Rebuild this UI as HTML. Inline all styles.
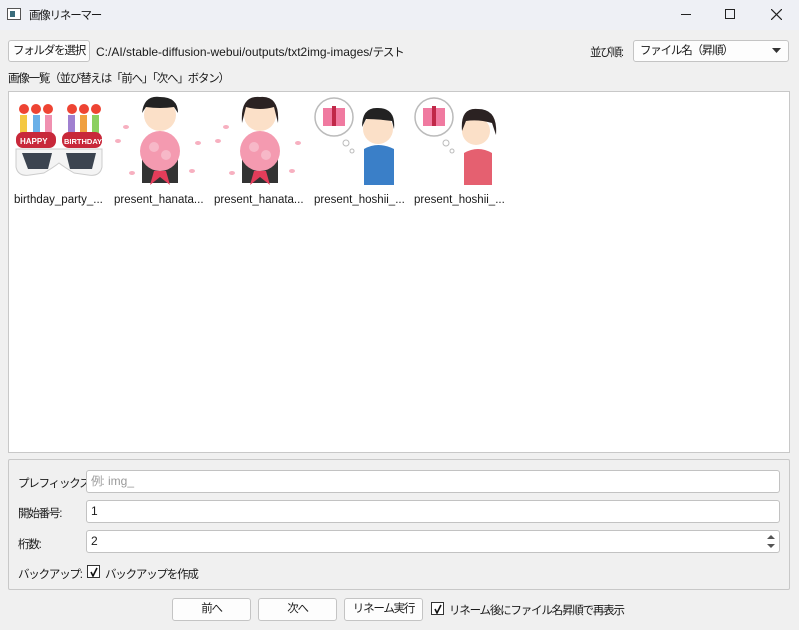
<!DOCTYPE html>
<html><head><meta charset="utf-8"><style>
*{box-sizing:border-box;margin:0;padding:0}
body{width:799px;height:630px;background:#f0f0f0;font-family:"Liberation Sans","Noto Sans CJK JP",sans-serif;font-size:12px;color:#1a1a1a;position:relative;overflow:hidden}
.a{position:absolute}
.j{letter-spacing:-1.2px;font-size:11.5px}
.btn{position:absolute;background:#fdfdfd;border:1px solid #c4c4c4;border-radius:3px;text-align:center;line-height:20px;font-size:11.5px;letter-spacing:-1.2px;white-space:nowrap}
.inp{position:absolute;background:#fff;border:1px solid #c2c2c2;border-radius:3px;height:23px;line-height:21px;padding-left:4px;font-size:12px}
.cb{position:absolute;width:13px;height:13px;border:1px solid #333;background:#fff}
.lbl{position:absolute;font-size:11.5px;white-space:nowrap}
</style></head><body>
<div class="a" style="left:0;top:0;width:799px;height:30px;background:#eef0f5"></div>
<div class="a" style="left:7px;top:8px;width:14px;height:12px;border:1px solid #555;background:#fff"><div style="margin:2px;width:5px;height:6px;background:#3b6d7c"></div></div>
<div class="lbl j" style="left:29px;top:7px">画像リネーマー</div>
<div class="a" style="left:681px;top:14px;width:10px;height:1px;background:#222"></div>
<div class="a" style="left:725px;top:9px;width:10px;height:10px;border:1px solid #222"></div>
<svg class="a" style="left:771px;top:9px" width="11" height="11"><path d="M0 0L11 11M11 0L0 11" stroke="#222" stroke-width="1.2"/></svg>

<div class="btn" style="left:8px;top:40px;width:82px;height:22px">フォルダを選択</div>
<div class="lbl" style="left:96px;top:44px;font-size:12px">C:/AI/stable-diffusion-webui/outputs/txt2img-images/<span class="j">テスト</span></div>
<div class="lbl j" style="left:590px;top:44px">並び順:</div>
<div class="btn" style="left:633px;top:40px;width:156px;height:22px;text-align:left;padding-left:6px">ファイル名（昇順）</div>
<svg class="a" style="left:772px;top:48px" width="9" height="6"><path d="M0 0H9L4.5 5Z" fill="#333"/></svg>
<div class="lbl j" style="left:8px;top:70px">画像一覧（並び替えは「前へ」「次へ」ボタン）</div>

<div class="a" style="left:8px;top:91px;width:782px;height:362px;background:#fff;border:1px solid #c8c8c8"></div>
<svg class="a" style="left:14px;top:97px" width="90" height="86">
<g fill="#e43"><circle cx="10" cy="12" r="5"/><circle cx="22" cy="12" r="5"/><circle cx="34" cy="12" r="5"/><circle cx="58" cy="12" r="5"/><circle cx="70" cy="12" r="5"/><circle cx="82" cy="12" r="5"/></g>
<rect x="6" y="18" width="7" height="18" fill="#f4c842"/><rect x="19" y="18" width="7" height="18" fill="#6ab0e8"/><rect x="31" y="18" width="7" height="18" fill="#f090b0"/>
<rect x="54" y="18" width="7" height="18" fill="#a080d0"/><rect x="66" y="18" width="7" height="18" fill="#f0a040"/><rect x="78" y="18" width="7" height="18" fill="#8cd060"/>
<rect x="2" y="35" width="40" height="16" rx="7" fill="#c8283a"/><rect x="48" y="35" width="40" height="16" rx="7" fill="#c8283a"/>
<text x="6" y="47" font-size="8" fill="#fff" font-weight="bold" font-family="Liberation Sans">HAPPY</text><text x="50" y="47" font-size="7.5" fill="#fff" font-weight="bold" font-family="Liberation Sans">BIRTHDAY</text>
<path d="M2 52H88V70Q86 80 74 78L60 76Q50 70 45 66Q40 70 30 76L16 78Q4 80 2 70Z" fill="#f4f4f4" stroke="#ccc"/>
<path d="M8 56H38L34 72H14Z" fill="#3c4450"/><path d="M52 56H82L78 72H56Z" fill="#3c4450"/></svg>

<svg class="a" style="left:112px;top:93px" width="96" height="96">
<circle cx="48" cy="22" r="16" fill="#fbe0c8"/><path d="M30 20Q32 2 48 4Q66 4 66 20L62 14Q48 16 34 14Z" fill="#222"/>
<path d="M30 52Q48 36 66 52V90H30Z" fill="#333"/>
<circle cx="48" cy="58" r="20" fill="#f49ab0"/><circle cx="42" cy="54" r="5" fill="#f7b8c8"/><circle cx="54" cy="62" r="5" fill="#f7b8c8"/>
<path d="M42 78L54 78L58 92L48 84L38 92Z" fill="#e33d5a"/>
<g fill="#f7b0c0"><ellipse cx="6" cy="48" rx="3" ry="2"/><ellipse cx="14" cy="34" rx="3" ry="2"/><ellipse cx="86" cy="50" rx="3" ry="2"/><ellipse cx="80" cy="78" rx="3" ry="2"/><ellipse cx="20" cy="80" rx="3" ry="2"/></g></svg>

<svg class="a" style="left:212px;top:93px" width="96" height="96">
<circle cx="48" cy="22" r="16" fill="#fbe0c8"/><path d="M30 30Q28 2 48 4Q68 2 66 30L62 14Q48 18 34 14Z" fill="#2b2222"/>
<path d="M30 52Q48 36 66 52V90H30Z" fill="#333"/>
<circle cx="48" cy="58" r="20" fill="#f49ab0"/><circle cx="42" cy="54" r="5" fill="#f7b8c8"/><circle cx="54" cy="62" r="5" fill="#f7b8c8"/>
<path d="M42 78L54 78L58 92L48 84L38 92Z" fill="#e33d5a"/>
<g fill="#f7b0c0"><ellipse cx="6" cy="48" rx="3" ry="2"/><ellipse cx="14" cy="34" rx="3" ry="2"/><ellipse cx="86" cy="50" rx="3" ry="2"/><ellipse cx="80" cy="78" rx="3" ry="2"/><ellipse cx="20" cy="80" rx="3" ry="2"/></g></svg>

<svg class="a" style="left:312px;top:95px" width="96" height="92">
<circle cx="22" cy="22" r="19" fill="#fff" stroke="#bbb" stroke-width="1.5"/><circle cx="34" cy="48" r="3" fill="#fff" stroke="#bbb"/><circle cx="40" cy="56" r="2" fill="#fff" stroke="#bbb"/>
<rect x="11" y="13" width="22" height="18" fill="#f07aa0"/><rect x="20" y="11" width="4" height="20" fill="#c02848"/>
<circle cx="66" cy="34" r="15" fill="#fbe0c8"/><path d="M50 32Q50 12 66 13Q84 13 82 34L80 26Q66 24 54 24Z" fill="#222"/>
<path d="M52 54Q66 46 82 54V90H52Z" fill="#3a7fc8"/></svg>

<svg class="a" style="left:412px;top:95px" width="96" height="92">
<circle cx="22" cy="22" r="19" fill="#fff" stroke="#bbb" stroke-width="1.5"/><circle cx="34" cy="48" r="3" fill="#fff" stroke="#bbb"/><circle cx="40" cy="56" r="2" fill="#fff" stroke="#bbb"/>
<rect x="11" y="13" width="22" height="18" fill="#f07aa0"/><rect x="20" y="11" width="4" height="20" fill="#c02848"/>
<circle cx="64" cy="36" r="14" fill="#fbe0c8"/><path d="M50 36Q48 12 66 14Q86 14 84 40L80 28Q66 24 54 26Z" fill="#2b2222"/>
<path d="M52 58Q66 50 80 58V90H52Z" fill="#e56070"/></svg>

<div class="lbl" style="left:14px;top:194px">birthday_party_...</div>
<div class="lbl" style="left:114px;top:194px">present_hanata...</div>
<div class="lbl" style="left:214px;top:194px">present_hanata...</div>
<div class="lbl" style="left:314px;top:194px">present_hoshii_...</div>
<div class="lbl" style="left:414px;top:194px">present_hoshii_...</div>

<div class="a" style="left:8px;top:459px;width:782px;height:131px;border:1px solid #c8c8c8;border-radius:2px"></div>
<div class="lbl j" style="left:18px;top:475px">プレフィックス:</div>
<div class="inp" style="left:86px;top:470px;width:694px;color:#999"><span class="j">例</span>: img_</div>
<div class="lbl j" style="left:18px;top:505px">開始番号:</div>
<div class="inp" style="left:86px;top:500px;width:694px">1</div>
<div class="lbl j" style="left:18px;top:536px">桁数:</div>
<div class="inp" style="left:86px;top:530px;width:694px">2</div>
<svg class="a" style="left:767px;top:534px" width="8" height="16"><path d="M0 5L4 1L8 5ZM0 10L4 14L8 10Z" fill="#555"/></svg>
<div class="lbl j" style="left:18px;top:566px">バックアップ:</div>
<div class="cb" style="left:87px;top:565px"></div>
<svg class="a" style="left:89px;top:567px" width="10" height="10"><path d="M2 5L4 9L8 1" stroke="#111" stroke-width="1.6" fill="none"/></svg>
<div class="lbl j" style="left:105px;top:566px">バックアップを作成</div>

<div class="btn" style="left:172px;top:598px;width:79px;height:23px;line-height:21px">前へ</div>
<div class="btn" style="left:258px;top:598px;width:79px;height:23px;line-height:21px">次へ</div>
<div class="btn" style="left:344px;top:598px;width:79px;height:23px;line-height:21px">リネーム実行</div>
<div class="cb" style="left:431px;top:602px"></div>
<svg class="a" style="left:433px;top:604px" width="10" height="10"><path d="M2 5L4 9L8 1" stroke="#111" stroke-width="1.6" fill="none"/></svg>
<div class="lbl j" style="left:449px;top:602px">リネーム後にファイル名昇順で再表示</div>
</body></html>
